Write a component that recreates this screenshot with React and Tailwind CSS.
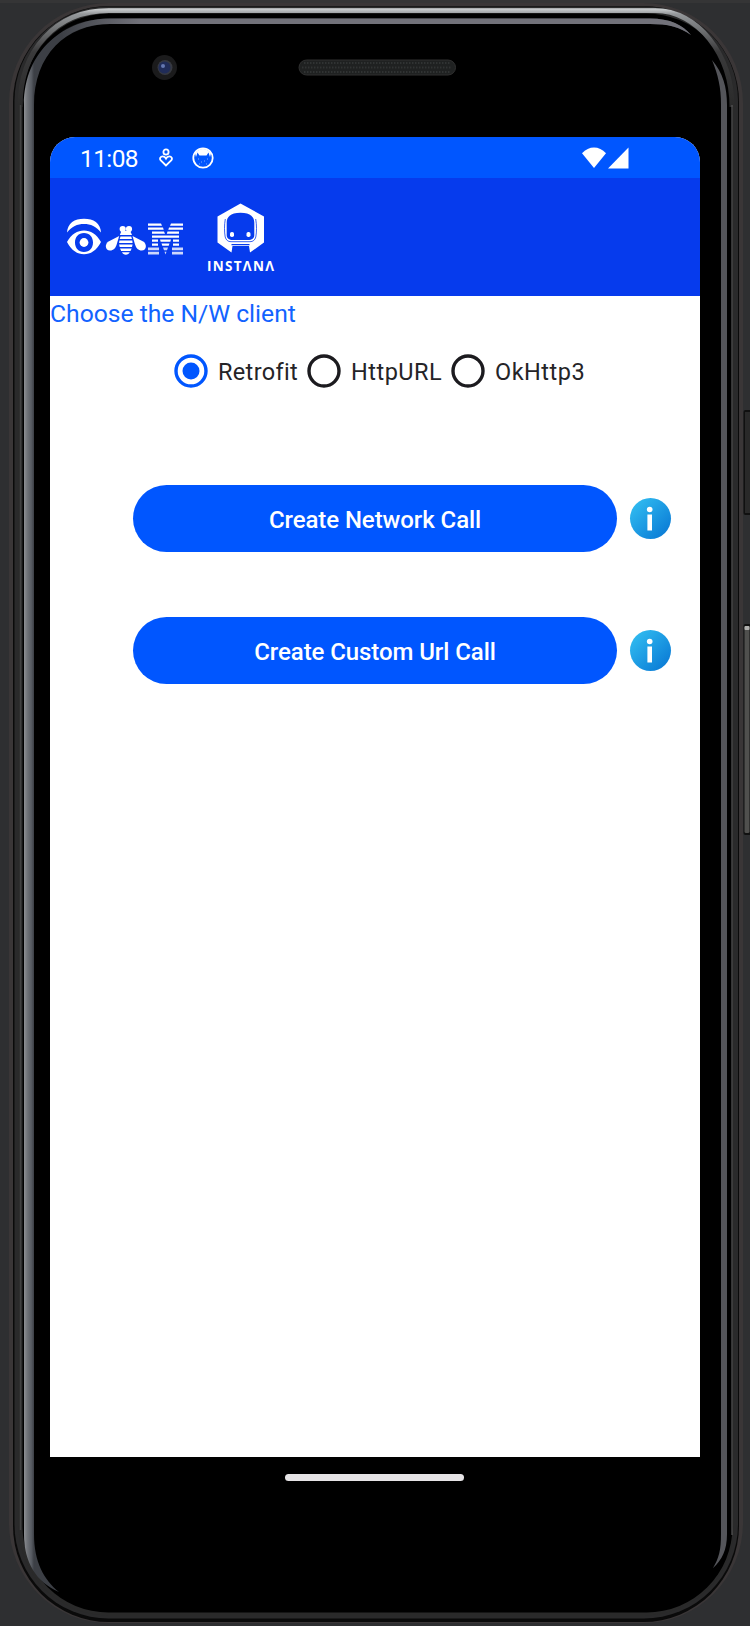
const ROBOTO = "font-['Roboto','Liberation_Sans',sans-serif]";

function PhoneFrame() {
  return (
    <svg className="absolute inset-0" width="750" height="1626" viewBox="0 0 750 1626" fill="none" aria-hidden="true">
      <defs>
        <linearGradient id="glassLeft" x1="24" y1="0" x2="34" y2="0" gradientUnits="userSpaceOnUse">
          <stop offset="0" stopColor="#8e9094" />
          <stop offset="0.3" stopColor="#72757a" />
          <stop offset="0.75" stopColor="#565a61" />
          <stop offset="1" stopColor="#3c3f45" />
        </linearGradient>
        <linearGradient id="topRim" x1="0" y1="7" x2="0" y2="107" gradientUnits="userSpaceOnUse">
          <stop offset="0" stopColor="#85888a" />
          <stop offset="0.025" stopColor="#c5c8ca" />
          <stop offset="0.07" stopColor="#95989b" />
          <stop offset="0.2" stopColor="#77797b" />
          <stop offset="0.45" stopColor="#3a3a3b" />
          <stop offset="1" stopColor="#2a2a2a" />
        </linearGradient>
        <linearGradient id="glassTop" x1="60" y1="0" x2="140" y2="0" gradientUnits="userSpaceOnUse">
          <stop offset="0" stopColor="#72727a" stopOpacity="0" />
          <stop offset="1" stopColor="#72727a" />
        </linearGradient>
      </defs>
      <rect width="750" height="1626" fill="#2e2f31" />
      <rect width="750" height="3" fill="#353536" />
      <rect x="9" y="3" width="734" height="1620" rx="100" fill="#3a3637" />
      <rect x="13" y="6" width="726" height="1616" rx="96" fill="#0a0a0a" />
      <rect x="14.500" y="6.500" width="723.500" height="1612" rx="94" fill="#2a2a2b" />
      <rect x="18.500" y="7.500" width="715.500" height="1608" rx="90" fill="#2a2a2a" />
      <rect x="22.500" y="13.500" width="710" height="1599" rx="86" fill="#000" />
      <path d="M20 107C20 50 56 10.500 109 10.500H655C698 10.500 732 55 732 107" stroke="url(#topRim)" strokeWidth="5" />
      <path d="M732 105V1535" stroke="#59595a" strokeWidth="1.200" />
      <path d="M20.500 105V1530" stroke="#414141" strokeWidth="1.500" />
      <path d="M24 105C24 50 65 18.500 110 18.500H650C670 18.500 683 25 691 35C680 27 668 24 650 24H110C66 24 34 55 34 105V1534C34 1562 44 1580 59 1592C36 1582 24 1562 24 1534Z" fill="url(#glassLeft)" />
      <path d="M60 32C76 22 94 18.500 110 18.500H650C670 18.500 683 25 691 35C680 27 668 24 650 24H110C94 24 76 28 64 38Z" fill="url(#glassTop)" />
      <path d="M712 60C723 73 727 87 727 105V1534C727 1550 722 1560 713 1568C719 1558 721 1550 721 1534V105C721 87 718 75 712 60Z" fill="#54555a" />
      <rect x="743.500" y="410" width="9" height="105" rx="2" fill="#101010" />
      <rect x="745" y="412" width="6" height="101" fill="#292929" />
      <rect x="743.500" y="624" width="9" height="211" rx="2" fill="#101010" />
      <rect x="744.500" y="626" width="5" height="207" rx="1.500" fill="#50504e" />
      <rect x="744.500" y="626" width="5" height="4" rx="1" fill="#b0b0ae" />
      <circle cx="164.500" cy="67.500" r="12.500" fill="#1b1b1c" />
      <circle cx="165" cy="67.500" r="7.500" fill="#363941" />
      <circle cx="164.500" cy="67.500" r="6" fill="#202c58" />
      <circle cx="163" cy="66" r="2" fill="#6478b0" />
      <rect x="299" y="60" width="156.500" height="15" rx="7.500" fill="#1f2121" stroke="#303030" />
      <path d="M304 63H450M302 67.500H452M304 72H450" stroke="#303333" strokeWidth="2" strokeDasharray="1.500 1.500" />
    </svg>
  );
}

function StatusBar() {
  return (
    <div className="flex h-[41px] items-center bg-[#0056ff] pl-[30px] pr-[71px] text-white">
      <span className="w-[59px] whitespace-nowrap pt-[2px] text-[24.500px] leading-[39px] tracking-[-0.6px]">11:08</span>
      <svg className="ml-[20px]" width="14" height="20" viewBox="0 0 14 20" fill="none" stroke="currentColor" strokeWidth="1.800">
        <circle cx="7" cy="4" r="2.600" />
        <path d="M7 17.500L1.800 12.300C.2 10.500 1.500 8.300 3.700 8.300C5.400 8.300 6.500 9.500 7 10.500C7.500 9.500 8.600 8.300 10.300 8.300C12.500 8.300 13.800 10.500 12.200 12.300Z" />
      </svg>
      <svg className="ml-[19px]" width="22" height="22" viewBox="0 0 22 22" fill="none">
        <circle cx="11" cy="11" r="9.700" stroke="currentColor" strokeWidth="1.800" />
        <path d="M3 6.500C7 .5 15 .5 19 6.500L18 10L16.500 5.500L14.500 8.500H7.500L5.500 5.500L4 10Z" fill="currentColor" />
        <path d="M6 12h1M15 12h1M9 15h1M12 14h1M7 17h1M14 17h1" stroke="#7eabff" />
      </svg>
      <div className="ml-auto flex gap-[2.500px]">
        <svg width="24" height="22" viewBox="0 0 24 22" fill="currentColor"><path d="M0 6.200C7-1.400 17-1.400 24 6.200L12 21Z" /></svg>
        <svg width="21" height="22" viewBox="0 0 21 22" fill="currentColor"><path d="M20.500 .500V21.500H0Z" /></svg>
      </div>
    </div>
  );
}

function EyeBeeM() {
  return (
    <svg width="118" height="38" viewBox="0 0 118 38" fill="#fff">
      <path d="M1 14.500C1.500 5 8.500 .7 18 .7S34.500 5 35 14.500C30.500 8.500 24.500 6 18 6S5.500 8.500 1 14.500Z" />
      <path fillRule="evenodd" d="M1 24C5.500 16 11.500 12.500 18 12.500S30.500 16 35 24C30.500 32.500 24.500 36.300 18 36.300S5.500 32.500 1 24ZM18 15C12.500 15 9 19 9 24.500S12.500 34 18 34S27 30 27 24.500S23.500 15 18 15Z" />
      <circle cx="18" cy="24.500" r="4.400" />
      <circle cx="56.700" cy="11" r="3.100" /><circle cx="63" cy="11" r="3.100" />
      <path d="M55.500 13H64.200L66 17H53.800Z" />
      <path d="M53.200 18L42.500 23.500C38.500 26 39 32.500 44 32.500C47.500 32.500 49.500 30 50.500 27Z" />
      <path d="M66.500 18L77.200 23.500C81.200 26 80.700 32.500 75.700 32.500C72.200 32.500 70.200 30 69.200 27Z" />
      <path d="M54.500 18.500H65.200L66 21H53.700ZM53.400 22.500H66.300L66.600 25H53.100ZM53.100 26.500H66.600L66 29H53.700ZM54 30.500H65.700L64.500 33H55.200ZM56 34.200H63.700C62.700 37.500 57 37.500 56 34.200Z" />
      <g transform="translate(1 .3)">
        <path d="M81 5.200H94L95 7.500H81ZM103 7.500L104 5.200H116V7.500ZM81 9.200H96L96.700 11.500H81ZM101.300 11.500L102 9.200H116V11.500ZM85 13.200H97L98 15.500H85ZM99.800 15.500L100.500 13.200H112V15.500ZM85 17.200H112V19.500H85ZM85 21.200H91V23.500H85ZM93 21.200H104L103.300 23.500H93.700ZM106 21.200H112V23.500H106ZM85 25.200H91V27.500H85ZM94.500 25.200H102.500L101.700 27.500H95.300ZM106 25.200H112V27.500H106Z" />
        <path opacity=".8" d="M81 29.200H92V32H81ZM96 29.200H101L100 32H97ZM105 29.200H116V32H105ZM81 33.500H92V36.300H81ZM97.500 33.500H99.500L98.500 36.300ZM105 33.500H116V36.300H105Z" />
      </g>
    </svg>
  );
}

function Instana() {
  return (
    <div className="flex w-[67px] flex-col items-center text-white">
      <svg width="48" height="50" viewBox="0 0 48 50">
        <path fill="#fff" fillRule="evenodd" d="M23.500 .5L47 13.500V39.500L33 49.500L32 43H15.500L14.500 49.500L.5 39.500V13.500ZM23.500 9.800C13 10 9.700 14 9.700 20V32C9.700 35.500 12 37 16 37H31C35 37 37.300 35.500 37.300 32V20C37.300 14 34 10 23.500 9.800Z" />
        <path d="M8.300 16C7.200 22 7.300 29 8.200 34Q9.500 38.700 14 38.700H33Q37.500 38.700 38.800 34C39.700 29 39.800 22 38.700 16" fill="none" stroke="#063bed" strokeWidth=".8" />
        <path d="M14.500 41.700H32.500" stroke="#063bed" strokeWidth="1.200" />
        <rect x="13" y="29" width="4" height="5" rx="1.800" fill="#fff" />
        <rect x="29.500" y="29" width="4" height="5" rx="1.800" fill="#fff" />
      </svg>
      <span className="mt-[5px] flex w-[67px] justify-between font-['Open_Sans',sans-serif] text-[13.500px] font-bold leading-[17px]">
        {["I", "N", "S", "T", "Λ", "N", "Λ"].map((letter, index) => <span key={index}>{letter}</span>)}
      </span>
    </div>
  );
}

function Radio({ label, checked, width, tracking }) {
  return (
    <label className={`flex items-center gap-[10px] ${width}`}>
      <svg className="shrink-0" width="34" height="34" viewBox="0 0 34 34">
        <circle cx="17" cy="17" r="15" fill="none" stroke={checked ? "#0056ff" : "#1c1b1f"} strokeWidth="3.400" />
        {checked && <circle cx="17" cy="17" r="8.500" fill="#0056ff" />}
      </svg>
      <span className={`whitespace-nowrap pt-[2px] text-[23.500px] leading-[34px] text-[#252427] ${tracking}`}>{label}</span>
    </label>
  );
}

function ActionRow({ children }) {
  return (
    <div className="flex h-[67px] items-center gap-[12.500px] pl-[83px]">
      <button className="h-[67px] w-[484px] rounded-full bg-[#0056ff] pt-[2px] text-[24px] font-medium tracking-[-0.080px] text-white">{children}</button>
      <span className="flex size-[41px] items-center justify-center rounded-full bg-linear-to-br from-[#36c3f3] to-[#0873d2]">
        <svg width="8" height="26" viewBox="0 0 8 26" fill="#fff">
          <circle cx="3.700" cy="3.500" r="2.800" /><rect x="1.400" y="8.500" width="4.600" height="16" />
        </svg>
      </span>
    </div>
  );
}

export default function App() {
  return (
    <div className={`relative h-[1626px] w-[750px] overflow-hidden bg-[#2e2f31] ${ROBOTO}`}>
      <PhoneFrame />
      <div className="relative pl-[50px] pt-[137px]">
        <main className="h-[1320px] w-[650px] overflow-hidden rounded-t-[25px] bg-white">
          <StatusBar />
          <header className="flex h-[118px] items-start bg-[#063bed] pl-[16px] pt-[25px] text-white">
            <div className="mt-[15px]"><EyeBeeM /></div>
            <div className="ml-[23px]"><Instana /></div>
          </header>
          <h1 className="h-[36px] whitespace-nowrap text-[24.700px] leading-[36px] tracking-[-0.020px] text-[#1263ff]">Choose the N/W client</h1>
          <div className="mt-[22px] flex h-[34px] pl-[124px]">
            <Radio label="Retrofit" checked width="w-[133px]" tracking="tracking-[0.340px]" />
            <Radio label="HttpURL" width="w-[144px]" tracking="tracking-[0.500px]" />
            <Radio label="OkHttp3" width="w-[140px]" tracking="tracking-[0.500px]" />
          </div>
          <div className="mt-[97px] flex flex-col gap-[65px]">
            <ActionRow>Create Network Call</ActionRow>
            <ActionRow>Create Custom Url Call</ActionRow>
          </div>
        </main>
        <div className="ml-[235px] mt-[17px] h-[7px] w-[179px] rounded-full bg-[#e6e4e6]" />
      </div>
    </div>
  );
}
